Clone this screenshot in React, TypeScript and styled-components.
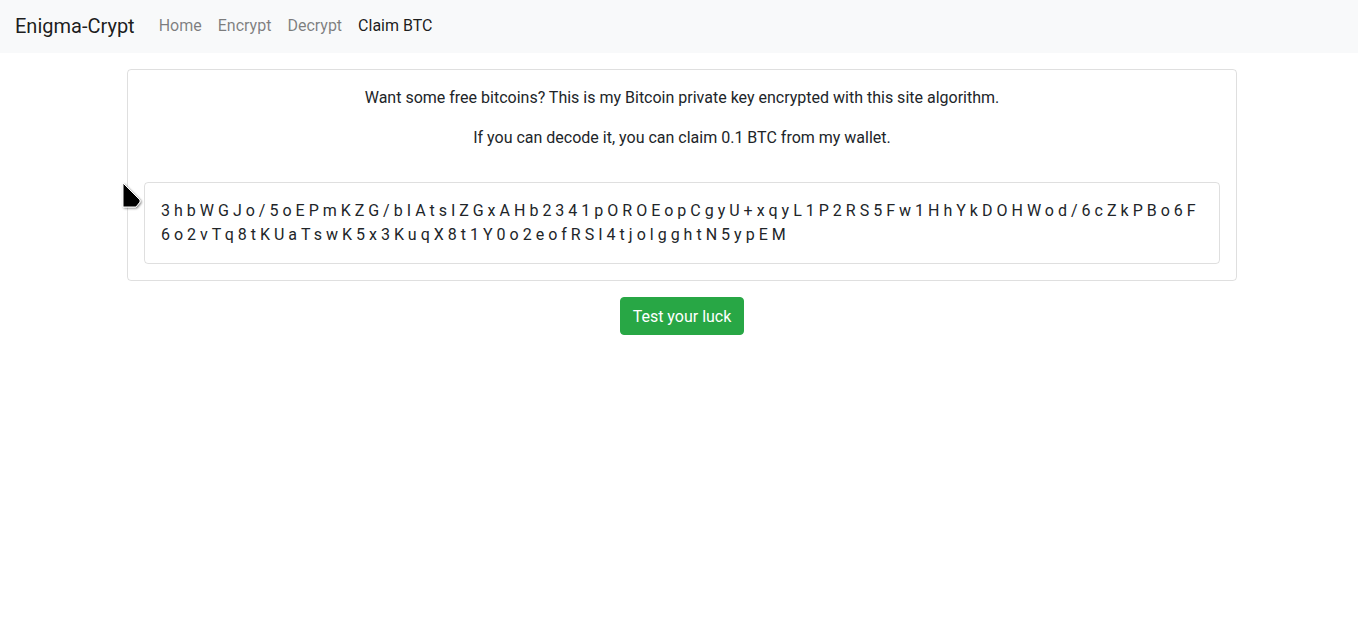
import React from "react";
import styled, { createGlobalStyle } from "styled-components";

const Global = createGlobalStyle`
  * { box-sizing: border-box; }
  body {
    margin: 0;
    font-family: Roboto, "Liberation Sans", Arial, sans-serif;
    font-size: 16px;
    line-height: 1.5;
    color: #212529;
    background: #fff;
  }
`;

const Navbar = styled.nav`
  display: flex;
  align-items: center;
  height: 53px;
  padding: 0 16px 2px 15px;
  background: #f8f9fa;
`;

const Brand = styled.a`
  font-size: 20px;
  line-height: 30px;
  color: rgba(0, 0, 0, 0.9);
  margin-right: 16px;
  text-decoration: none;
`;

const NavList = styled.div`
  display: flex;
`;

const NavLink = styled.a<{ $active?: boolean }>`
  padding: 8px 8px;
  color: ${(p) => (p.$active ? "rgba(0,0,0,0.9)" : "rgba(0,0,0,0.5)")};
  text-decoration: none;
`;

const Container = styled.main`
  width: 1146px;
  margin: 0 auto;
  padding: 16px 15px 0 21px;
  display: flex;
  flex-direction: column;
  align-items: center;
`;

const Card = styled.section`
  position: relative;
  width: 100%;
  border: 1px solid rgba(0, 0, 0, 0.125);
  border-radius: 4px;
  padding: 16px;
  text-align: center;
`;

const Para = styled.p`
  margin: 0 0 16px;
`;

const KeyBox = styled.div`
  margin-top: 32px;
  border: 1px solid rgba(0, 0, 0, 0.125);
  border-radius: 4px;
  padding: 16px;
  text-align: left;
  letter-spacing: 4px;
  word-break: break-all;
  line-height: 24px;
`;

const Cursor = styled.svg`
  position: absolute;
  left: -6px;
  top: 112px;
  overflow: visible;
`;

const Button = styled.button`
  margin-top: 16px;
  font-family: inherit;
  font-size: 16px;
  line-height: 24px;
  padding: 7px 12px 5px;
  height: 38px;
  color: #fff;
  background: #28a745;
  border: 1px solid #28a745;
  border-radius: 4px;
`;

const KEY =
  "3hbWGJo/5oEPmKZG/bIAtsIZGxAHb2341pOROEopCgyU+xqyL1P2RS5Fw1HhYkDOHWod/6cZkPBo6F6o2vTq8tKUaTswK5x3KuqX8t1Y0o2eofRSI4tjolgghtN5ypEM";

export default function App() {
  return (
    <>
      <Global />
      <Navbar>
        <Brand>Enigma-Crypt</Brand>
        <NavList>
          <NavLink>Home</NavLink>
          <NavLink>Encrypt</NavLink>
          <NavLink>Decrypt</NavLink>
          <NavLink $active>Claim BTC</NavLink>
        </NavList>
      </Navbar>
      <Container>
        <Card>
          <Para>Want some free bitcoins? This is my Bitcoin private key encrypted with this site algorithm.</Para>
          <Para>If you can decode it, you can claim 0.1 BTC from my wallet.</Para>
          <KeyBox>{KEY}</KeyBox>
          <Cursor width="20" height="28" viewBox="0 0 20 28">
            <defs>
              <filter id="sh" x="-50%" y="-50%" width="200%" height="200%">
                <feDropShadow dx="1" dy="1" stdDeviation="0.8" floodColor="#000" floodOpacity="0.5" />
              </filter>
            </defs>
            <polygon
              points="1,1 18,18 18,20 14,25 1,25"
              fill="#000"
              stroke="#fff"
              strokeWidth="1"
              filter="url(#sh)"
            />
          </Cursor>
        </Card>
        <Button>Test your luck</Button>
      </Container>
    </>
  );
}
